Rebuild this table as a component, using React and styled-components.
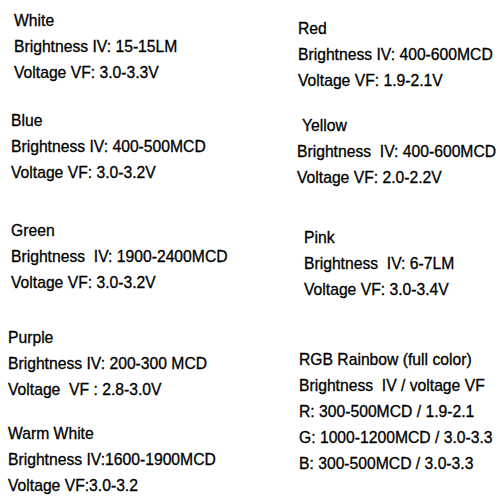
import React from 'react';
import styled, { createGlobalStyle } from 'styled-components';

const GlobalStyle = createGlobalStyle`
  html, body {
    margin: 0;
    padding: 0;
    background: #ffffff;
  }
  body {
    font-family: "Liberation Sans", Arial, sans-serif;
    color: #000000;
  }
`;

const Sheet = styled.div`
  width: 500px;
  height: 500px;
  overflow: hidden;
  display: grid;
  grid-template-columns: 290px 210px;
  background: #ffffff;
`;

const Column = styled.div`
  display: flex;
  flex-direction: column;
  padding-top: ${(p) => p.$top}px;
`;

const Block = styled.div`
  display: flex;
  flex-direction: column;
  margin-top: ${(p) => p.$gap}px;
  padding-left: ${(p) => p.$x}px;
`;

const Line = styled.div`
  font-size: 15.7px;
  line-height: 26px;
  height: 26px;
  white-space: pre;
  -webkit-text-stroke: 0.3px #000000;
  padding-left: ${(p) => p.$indent || 0}px;
`;

const left = [
  {
    gap: 0,
    x: 14,
    lines: ['White', 'Brightness IV: 15-15LM', 'Voltage VF: 3.0-3.3V'],
  },
  {
    gap: 22,
    x: 11,
    lines: ['Blue', 'Brightness IV: 400-500MCD', 'Voltage VF: 3.0-3.2V'],
  },
  {
    gap: 32,
    x: 11,
    lines: ['Green', 'Brightness  IV: 1900-2400MCD', 'Voltage VF: 3.0-3.2V'],
  },
  {
    gap: 29,
    x: 8,
    lines: ['Purple', 'Brightness IV: 200-300 MCD', 'Voltage  VF : 2.8-3.0V'],
  },
  {
    gap: 18,
    x: 8,
    lines: ['Warm White', 'Brightness IV:1600-1900MCD', 'Voltage VF:3.0-3.2'],
  },
];

const right = [
  {
    gap: 0,
    x: 8,
    lines: ['Red', 'Brightness IV: 400-600MCD', 'Voltage VF: 1.9-2.1V'],
  },
  {
    gap: 19,
    x: 7,
    indent: 5,
    lines: ['Yellow', 'Brightness  IV: 400-600MCD', 'Voltage VF: 2.0-2.2V'],
  },
  {
    gap: 34,
    x: 14,
    lines: ['Pink', 'Brightness  IV: 6-7LM', 'Voltage VF: 3.0-3.4V'],
  },
  {
    gap: 44,
    x: 9,
    lines: [
      'RGB Rainbow (full color)',
      'Brightness  IV / voltage VF',
      'R: 300-500MCD / 1.9-2.1',
      'G: 1000-1200MCD / 3.0-3.3',
      'B: 300-500MCD / 3.0-3.3',
    ],
  },
];

const renderBlocks = (blocks) =>
  blocks.map((b) => (
    <Block key={b.lines[0]} $gap={b.gap} $x={b.x}>
      {b.lines.map((text, i) => (
        <Line key={i} $indent={i === 0 ? b.indent : 0}>
          {text}
        </Line>
      ))}
    </Block>
  ));

export default function App() {
  return (
    <>
      <GlobalStyle />
      <Sheet>
        <Column $top={8}>{renderBlocks(left)}</Column>
        <Column $top={16}>{renderBlocks(right)}</Column>
      </Sheet>
    </>
  );
}
